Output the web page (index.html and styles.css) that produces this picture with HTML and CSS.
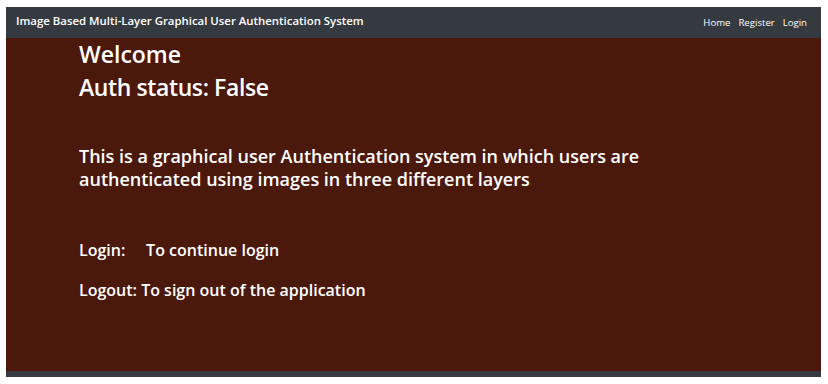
FILE: index.html
```html
<!DOCTYPE html>
<html lang="en">
<head>
    <meta charset="UTF-8">
    <meta name="viewport" content="width=device-width, initial-scale=1.0">
    <title>Graphical User Authentication</title>
    <link rel="stylesheet" href="styles.css">
</head>
<body>
    <div class="frame">
        <nav class="navbar">
            <a class="brand" href="#">Image Based Multi-Layer Graphical User Authentication System</a>
            <div class="nav-links">
                <a href="#">Home</a>
                <a href="#">Register</a>
                <a href="#">Login</a>
            </div>
        </nav>
        <main class="content">
            <h1>Welcome</h1>
            <h1 class="status">Auth status: False</h1>
            <h2 class="intro">This is a graphical user Authentication system in which users are authenticated using images in three different layers</h2>
            <p class="help first">Login:&nbsp;&nbsp;&nbsp; &nbsp;To continue login</p>
            <p class="help">Logout: To sign out of the application</p>
        </main>
        <div class="footer"></div>
    </div>
</body>
</html>
```

FILE: styles.css
```css
body {
    margin: 0;
    background: #fff;
    font-family: "Open Sans", "Noto Sans", sans-serif;
}
.frame {
    margin: 7px 7px 7px 6px;
    width: 815px;
}
.navbar {
    display: flex;
    align-items: center;
    justify-content: space-between;
    height: 31px;
    padding: 0 14px 0 10px;
    background: #343a40;
}
.navbar a {
    color: #fff;
    text-decoration: none;
}
.brand {
    font-size: 11.4px;
    font-weight: 600;
    margin-top: -5px;
}
.nav-links {
    display: flex;
    gap: 8px;
    font-size: 9.6px;
}
.content {
    height: 333px;
    padding-left: 73px;
    background: #4a190c;
    color: #fff;
    box-sizing: border-box;
    overflow: hidden;
}
h1 {
    margin: 0;
    font-size: 23px;
    font-weight: 600;
    line-height: 33px;
}
.status {
    letter-spacing: -0.4px;
}
.intro {
    margin: 41px 0 0;
    width: 590px;
    font-size: 18px;
    font-weight: 600;
    line-height: 23px;
}
.help {
    margin: 0;
    font-size: 16px;
    font-weight: 600;
    line-height: 20px;
}
.help.first {
    margin-top: 49px;
    margin-bottom: 20px;
}
.footer {
    height: 6px;
    background: #343a40;
}
```
